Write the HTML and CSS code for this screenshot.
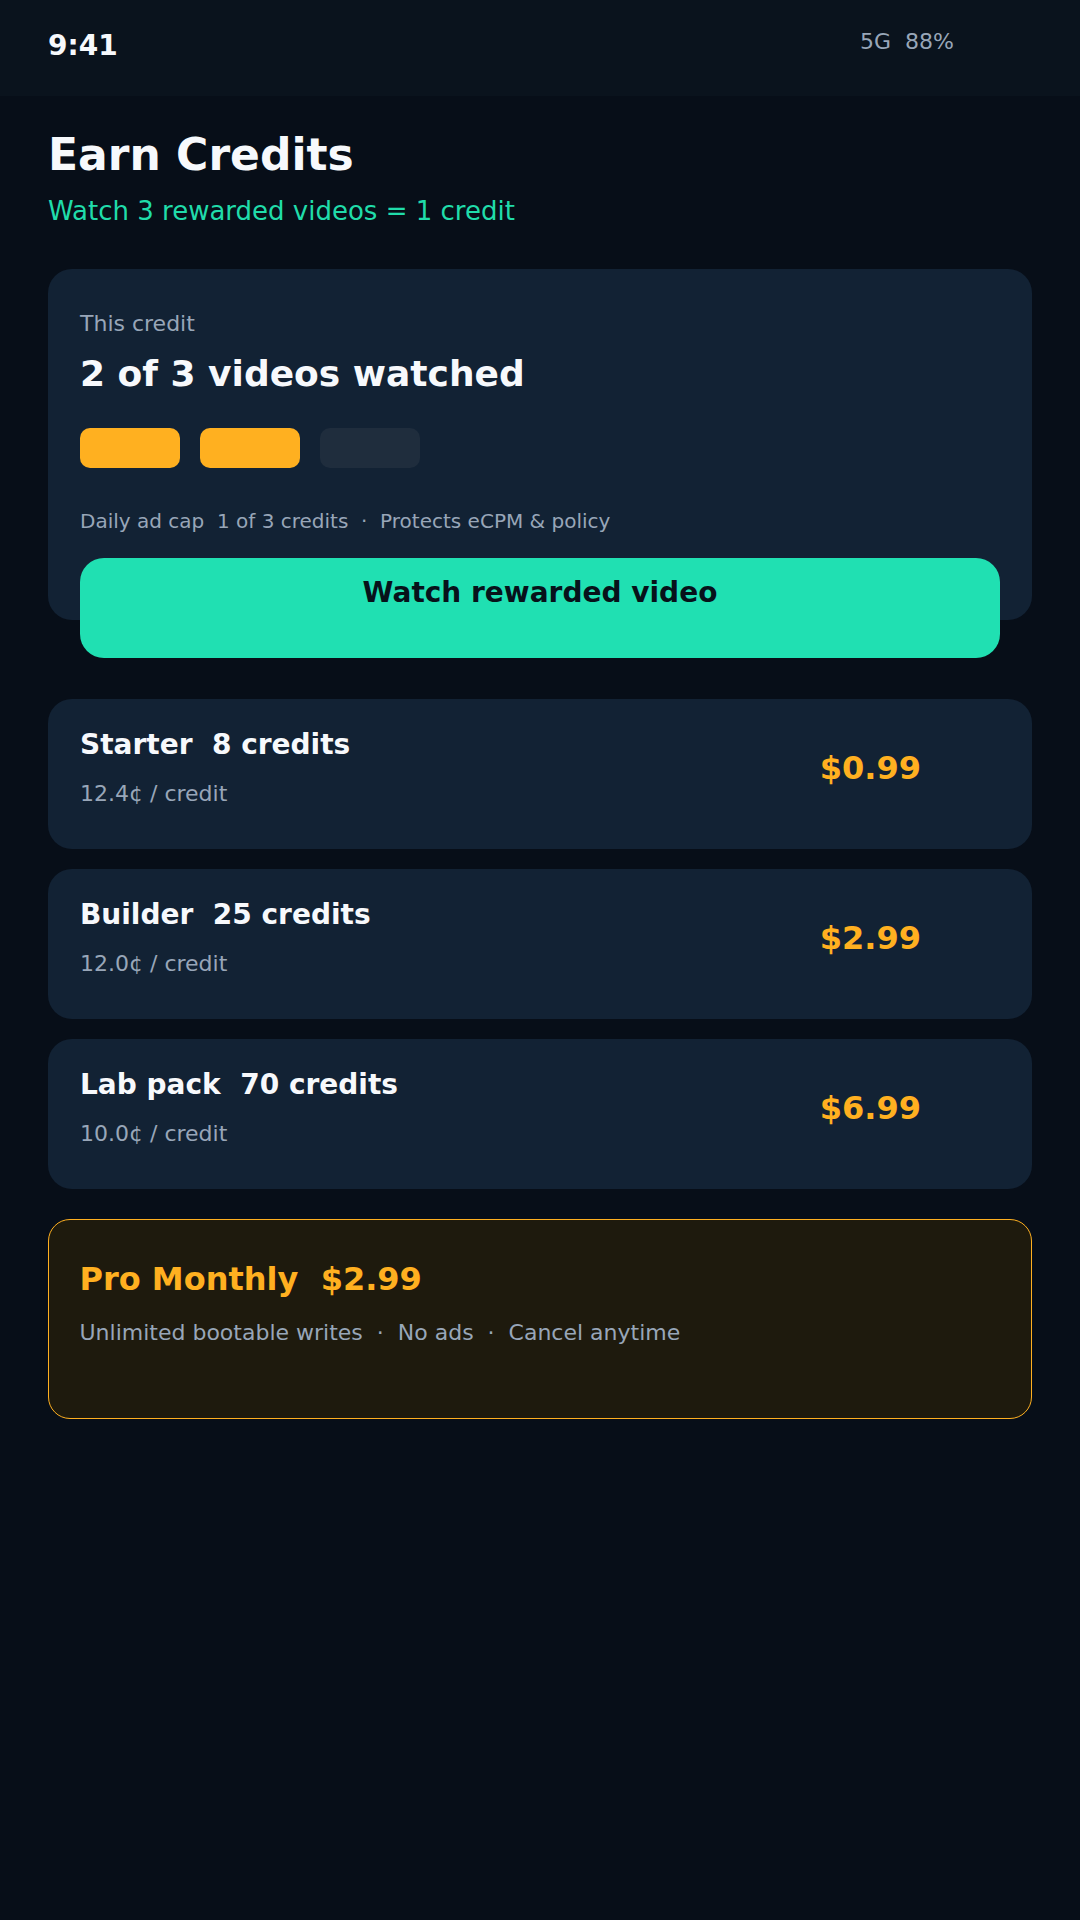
FILE: index.html
```html
<!DOCTYPE html>
<html lang="en">
<head>
<meta charset="utf-8">
<title>Earn Credits</title>
<link rel="stylesheet" href="styles.css">
</head>
<body>
<div class="status">
  <span class="time">9:41</span>
  <span class="sys">5G&nbsp; 88%</span>
</div>
<main class="main">
  <h1 class="title">Earn Credits</h1>
  <p class="subtitle">Watch 3 rewarded videos = 1 credit</p>

  <section class="hero">
    <p class="hero-label">This credit</p>
    <h2 class="hero-head">2 of 3 videos watched</h2>
    <div class="pills">
      <span class="pill on"></span>
      <span class="pill on"></span>
      <span class="pill"></span>
    </div>
    <p class="cap">Daily ad cap&nbsp; 1 of 3 credits&nbsp; ·&nbsp; Protects eCPM &amp; policy</p>
    <button class="watch">Watch rewarded video</button>
  </section>

  <div class="plans">
    <div class="plan">
      <div class="plan-info">
        <div class="plan-name">Starter&nbsp; 8 credits</div>
        <div class="plan-rate">12.4¢ / credit</div>
      </div>
      <div class="plan-price">$0.99</div>
    </div>
    <div class="plan">
      <div class="plan-info">
        <div class="plan-name">Builder&nbsp; 25 credits</div>
        <div class="plan-rate">12.0¢ / credit</div>
      </div>
      <div class="plan-price">$2.99</div>
    </div>
    <div class="plan">
      <div class="plan-info">
        <div class="plan-name">Lab pack&nbsp; 70 credits</div>
        <div class="plan-rate">10.0¢ / credit</div>
      </div>
      <div class="plan-price">$6.99</div>
    </div>
  </div>

  <section class="pro">
    <div class="pro-name">Pro Monthly&nbsp; $2.99</div>
    <div class="pro-desc">Unlimited bootable writes&nbsp; ·&nbsp; No ads&nbsp; ·&nbsp; Cancel anytime</div>
  </section>
</main>
</body>
</html>
```

FILE: styles.css
```css
* { box-sizing: border-box; }

html, body {
  margin: 0;
  padding: 0;
  background: #070e18;
  font-family: "DejaVu Sans", "Noto Sans", sans-serif;
  color: #f4f6fa;
}

body { min-height: 1920px; }

.status {
  height: 96px;
  background: #0a131d;
  display: flex;
  justify-content: space-between;
  align-items: flex-start;
  padding: 29px 126px 0 48px;
}

.time {
  font-size: 28px;
  font-weight: bold;
  color: #f7f9fc;
}

.sys {
  font-size: 22px;
  color: #98a6b8;
}

.main {
  padding: 0 48px;
}

.title {
  margin: 33px 0 0;
  font-size: 44px;
  font-weight: bold;
  line-height: normal;
  color: #f7f9fc;
}

.subtitle {
  margin: 16px 0 0;
  font-size: 26px;
  color: #20dcaa;
}

.hero {
  margin-top: 43px;
  height: 351px;
  background: #122234;
  border-radius: 24px;
  padding: 42px 32px 0;
}

.hero-label {
  margin: 0;
  font-size: 22px;
  color: #98a6b8;
}

.hero-head {
  margin: 17px 0 0;
  font-size: 36px;
  font-weight: bold;
  line-height: normal;
  color: #f7f9fc;
}

.pills {
  margin-top: 34px;
  display: flex;
  gap: 20px;
}

.pill {
  width: 100px;
  height: 40px;
  border-radius: 10px;
  background: #1f2d3d;
}

.pill.on { background: #ffb020; }

.cap {
  margin: 41px 0 0;
  font-size: 20px;
  color: #98a6b8;
}

.watch {
  margin-top: 25px;
  width: 920px;
  height: 100px;
  border: none;
  border-radius: 24px;
  background: #20e0b2;
  color: #07121a;
  font-family: "DejaVu Sans", sans-serif;
  font-size: 28px;
  font-weight: bold;
  line-height: normal;
  padding: 18px 0 0;
  display: flex;
  justify-content: center;
  align-items: flex-start;
}

.plans {
  margin-top: 79px;
  display: flex;
  flex-direction: column;
  gap: 20px;
}

.plan {
  height: 150px;
  background: #122234;
  border-radius: 24px;
  padding: 28.5px 111px 0 32px;
  display: flex;
  justify-content: space-between;
  align-items: flex-start;
}

.plan-info { display: flex; flex-direction: column; }

.plan-name {
  font-size: 28px;
  font-weight: bold;
  color: #f7f9fc;
}

.plan-rate {
  margin-top: 20px;
  font-size: 22px;
  color: #98a6b8;
}

.plan-price {
  margin-top: 21.5px;
  font-size: 32px;
  font-weight: bold;
  color: #ffb020;
}

.pro {
  margin-top: 30px;
  height: 200px;
  background: #1e1a0d;
  border: 1.5px solid #ffb020;
  border-radius: 22px;
  padding: 39.5px 30.5px 0;
}

.pro-name {
  font-size: 32px;
  font-weight: bold;
  color: #ffb020;
}

.pro-desc {
  margin-top: 22px;
  font-size: 22px;
  color: #98a6b8;
}
```
